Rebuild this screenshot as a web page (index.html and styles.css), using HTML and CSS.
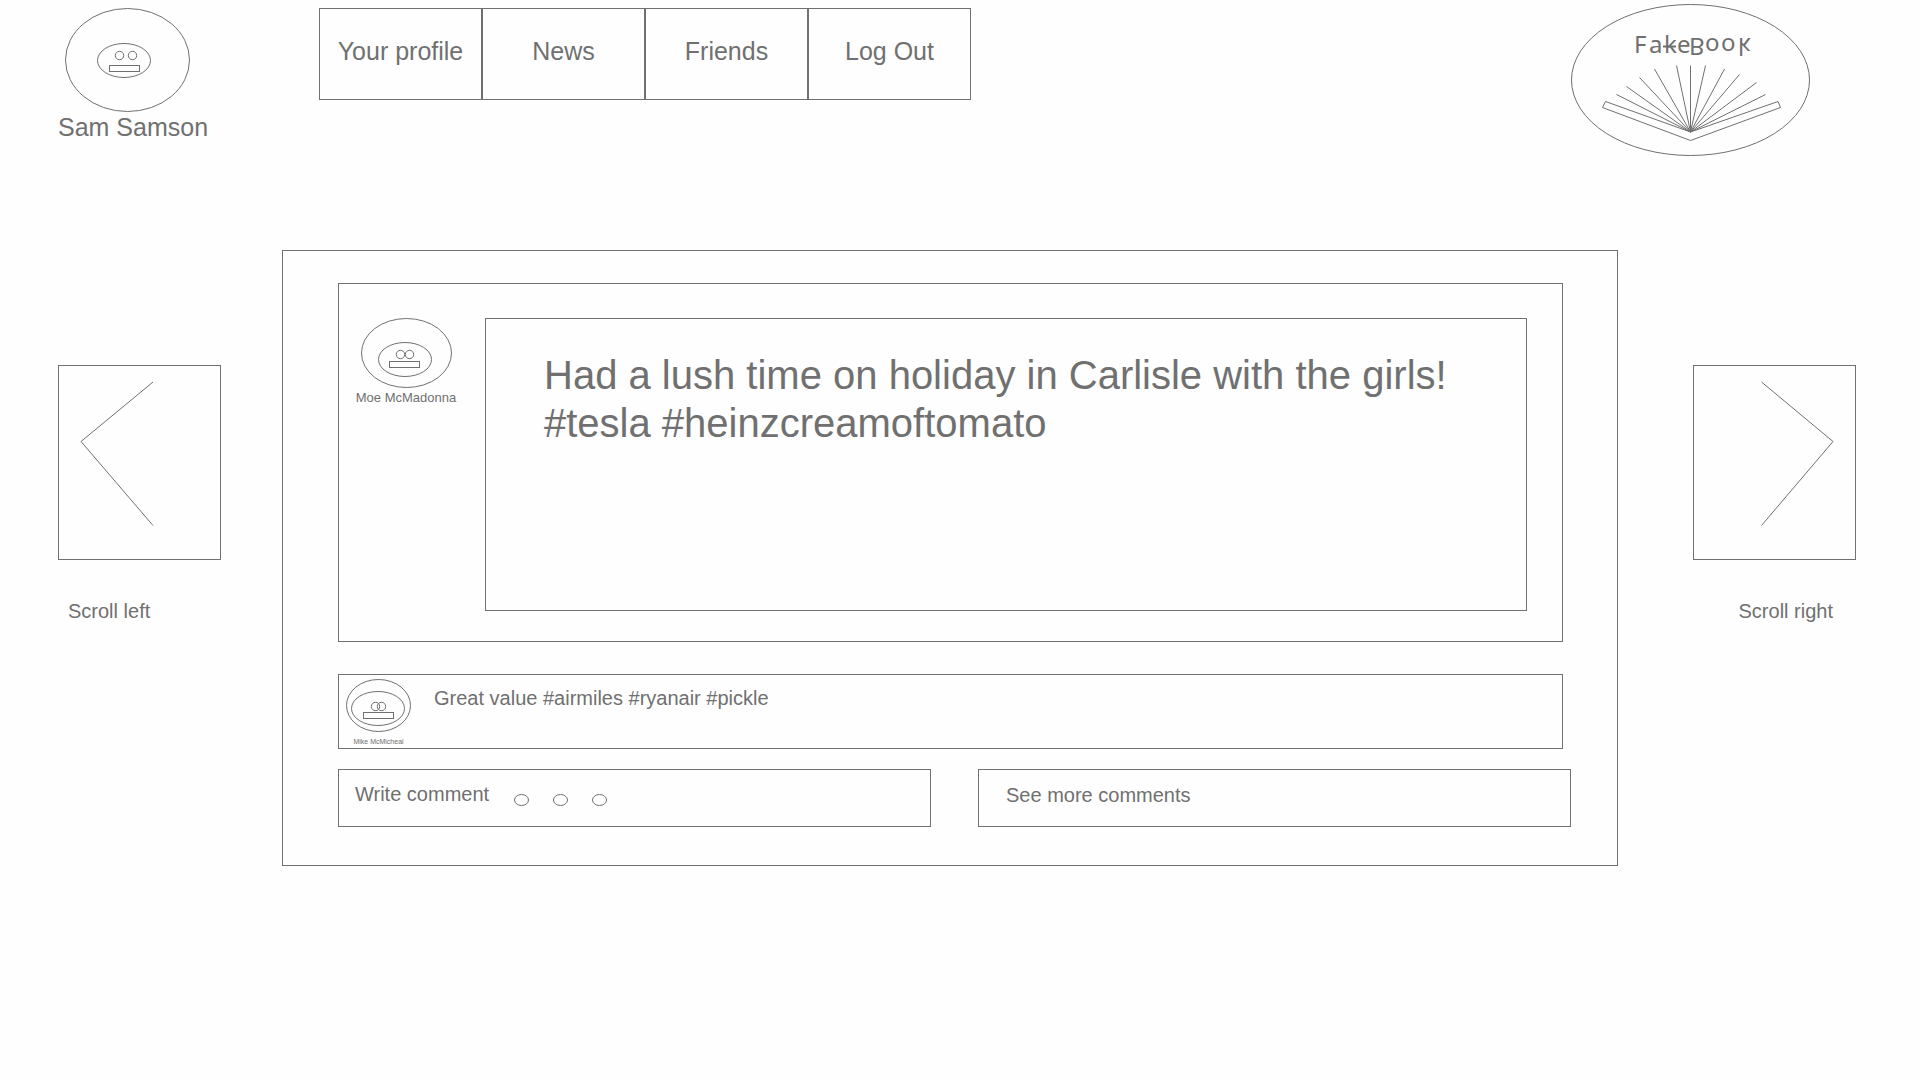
FILE: index.html
```html
<!DOCTYPE html>
<html lang="en">
<head>
<meta charset="utf-8">
<meta name="viewport" content="width=device-width, initial-scale=1">
<title>FakeBook</title>
<link rel="stylesheet" href="styles.css">
</head>
<body>
<header class="header">
  <div class="user">
    <svg class="art" width="127" height="105" viewBox="64 7 127 105" aria-hidden="true">
      <ellipse cx="127.500" cy="60" rx="62" ry="51.500"/>
      <ellipse cx="124" cy="60.500" rx="26.500" ry="17"/>
      <circle cx="119.500" cy="55.500" r="4.200"/>
      <circle cx="132.500" cy="55.500" r="4.200"/>
      <rect x="109.500" y="65.500" width="30" height="6"/>
    </svg>
    <span class="user-name">Sam Samson</span>
  </div>
  <nav class="nav">
    <a class="nav-link" href="#profile">Your profile</a>
    <a class="nav-link" href="#news">News</a>
    <a class="nav-link" href="#friends">Friends</a>
    <a class="nav-link" href="#logout">Log Out</a>
  </nav>
  <svg class="art logo" width="241" height="154" viewBox="1570 3 241 154" role="img" aria-label="FakeBook">
    <ellipse cx="1690.500" cy="80" rx="119" ry="75.500"/>
    <text class="logo-text" x="1634 1649 1664 1677" y="53">Fake</text>
    <!-- second half of the name is mirrored below its baseline -->
    <text class="logo-text" transform="translate(0 38) scale(1 -1)" x="1689 1705 1721 1738" y="0">Book</text>
    <path class="logo-strike" d="M1663 46.500H1676"/>
    <path d="M1690.500 132L1605.500 101.500L1602.500 107.500L1690.500 140.500L1780.500 107.500L1778 101.500ZM1690.500 132L1616.500 94.500M1690.500 132L1626.500 86.500M1690.500 132L1639.500 77.500M1690.500 132L1654.500 69M1690.500 132L1676.500 65.500M1690.500 132V65.500M1690.500 132L1705.500 65.500M1690.500 132L1724.500 69M1690.500 132L1739.500 74.500M1690.500 132L1756.500 82.500M1690.500 132L1765.500 94.500"/>
  </svg>
</header>
<main class="main">
  <div class="scroller">
    <button class="scroll-button" type="button" aria-labelledby="left-label">
      <svg class="art" width="161" height="193" viewBox="59 366 161 193" aria-hidden="true"><path d="M153 382L81 441.500L153 525.500"/></svg>
    </button>
    <span class="scroll-label" id="left-label">Scroll left</span>
  </div>
  <section class="panel">
    <article class="post">
      <div class="author">
        <svg class="art" width="93" height="70" viewBox="360 318 93 70" aria-hidden="true">
          <ellipse cx="406.500" cy="353" rx="45" ry="34.500"/>
          <ellipse cx="405" cy="359.500" rx="26.500" ry="17"/>
          <circle cx="400.500" cy="354.500" r="4.200"/>
          <circle cx="409.500" cy="354.500" r="4.200"/>
          <rect x="389.500" y="361.500" width="30" height="6"/>
        </svg>
        <span class="author-name">Moe McMadonna</span>
      </div>
      <p class="post-text">Had a lush time on holiday in Carlisle with the girls!<br>#tesla #heinzcreamoftomato</p>
    </article>
    <article class="comment">
      <div class="commenter">
        <svg class="art" width="67" height="54" viewBox="345 678 67 54" aria-hidden="true">
          <ellipse cx="378.500" cy="705.500" rx="32" ry="26"/>
          <ellipse cx="378" cy="708.500" rx="26.500" ry="17"/>
          <circle cx="375.500" cy="706.500" r="4.200"/>
          <circle cx="381.500" cy="706.500" r="4.200"/>
          <rect x="363.500" y="712.500" width="30" height="6"/>
        </svg>
        <span class="commenter-name">Mike McMicheal</span>
      </div>
      <p class="comment-text">Great value #airmiles #ryanair #pickle</p>
    </article>
    <div class="actions">
      <button class="action" type="button">Write comment
        <svg class="art" width="94" height="14" viewBox="514 793 94 14" aria-hidden="true">
          <ellipse cx="522.500" cy="800" rx="7" ry="5.500"/>
          <ellipse cx="561.500" cy="800" rx="7" ry="5.500"/>
          <ellipse cx="600.500" cy="800" rx="7" ry="5.500"/>
        </svg>
      </button>
      <button class="action action-more" type="button">See more comments</button>
    </div>
  </section>
  <div class="scroller scroller-right">
    <button class="scroll-button" type="button" aria-labelledby="right-label">
      <svg class="art" width="161" height="193" viewBox="1694 366 161 193" aria-hidden="true"><path d="M1761.500 382L1833 441.500L1761.500 525.500"/></svg>
    </button>
    <span class="scroll-label" id="right-label">Scroll right</span>
  </div>
</main>
</body>
</html>
```
FILE: styles.css
```css
* {
  box-sizing: border-box;
}

body {
  margin: 0;
  background: #fefefe;
  color: #707070;
  font-family: "Liberation Sans", Arial, sans-serif;
  font-size: 20px;
  line-height: 24px;
}

button {
  padding: 0;
  border: 1px solid #707070;
  background: transparent;
  color: inherit;
  font: inherit;
  cursor: pointer;
}

p {
  margin: 0;
}

.art {
  display: block;
  flex: none;
  fill: none;
  stroke: #707070;
  stroke-width: 1;
}

.header {
  display: flex;
  align-items: flex-start;
  height: 250px;
  padding: 3px 109px 0 58px;
}

.user {
  display: flex;
  flex-direction: column;
  align-items: center;
  width: 150px;
  margin-right: 111px;
  padding-top: 4px;
}

.user .art {
  margin-right: 11px;
}

.user-name {
  font-size: 25px;
  line-height: 30px;
  white-space: nowrap;
}

.nav {
  display: flex;
  margin-top: 5px;
}

.nav-link {
  width: 163px;
  height: 92px;
  padding-top: 27px;
  border: 1px solid #707070;
  color: inherit;
  font-size: 25px;
  line-height: 30px;
  text-align: center;
  text-decoration: none;
}

.logo {
  margin-left: auto;
}

.logo-text {
  fill: #707070;
  stroke: none;
  font-family: "Noto Sans", sans-serif;
  font-size: 24px;
}

.logo-strike {
  stroke-width: 2;
}

.main {
  display: flex;
  align-items: flex-start;
  padding: 0 64px 0 58px;
}

.scroller {
  display: flex;
  flex: none;
  flex-direction: column;
  gap: 39px;
  width: 163px;
  padding-top: 115px;
}

.scroll-button {
  height: 195px;
}

.scroll-label {
  padding: 0 10px;
}

.scroller-right {
  text-align: right;
}

.scroller-right .scroll-label {
  padding: 0 23px;
}

.panel {
  flex: 1;
  margin: 0 75px 0 61px;
  padding: 32px 46px 38px 55px;
  border: 1px solid #707070;
}

.post {
  display: flex;
  margin-right: 8px;
  padding: 34px 35px 30px 0;
  border: 1px solid #707070;
}

.author {
  display: flex;
  flex: none;
  flex-direction: column;
  align-items: center;
  width: 146px;
  padding-right: 12px;
}

.author-name {
  padding-top: 2px;
  font-size: 13px;
  line-height: 16px;
}

.post-text {
  flex: 1;
  min-height: 293px;
  padding: 32px 58px;
  border: 1px solid #707070;
  font-size: 40px;
  line-height: 48px;
}

.comment {
  display: flex;
  gap: 22px;
  height: 75px;
  margin: 32px 8px 20px 0;
  padding: 3px 6px;
  border: 1px solid #707070;
}

.commenter {
  display: flex;
  flex: none;
  flex-direction: column;
  align-items: center;
  gap: 6px;
}

.commenter-name {
  font-size: 7px;
  line-height: 8px;
}

.comment-text {
  padding-top: 8px;
}

.actions {
  display: grid;
  grid-template-columns: 1fr 1fr;
  gap: 47px;
}

.action {
  display: flex;
  gap: 24px;
  height: 58px;
  padding: 12px 16px;
  text-align: left;
}

.action .art {
  margin-top: 11px;
}

.action-more {
  padding: 13px 27px;
}
```
